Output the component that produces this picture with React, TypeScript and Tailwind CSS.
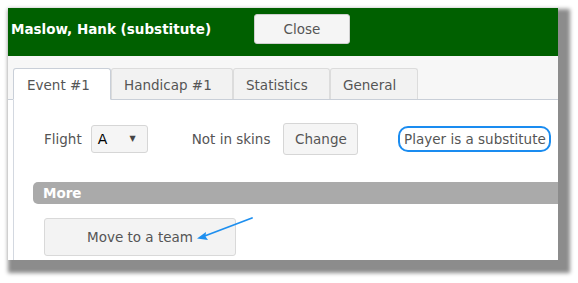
const font = { fontFamily: '"DejaVu Sans", Verdana, sans-serif' }

function Tab({ label, width, active }: { label: string; width: string; active?: boolean }) {
    return (
        <div
            className={
                active
                    ? `${width} h-[32px] -mb-px bg-white border border-[#c9cfd8] border-b-white rounded-t-[3px] flex items-center pl-[13px] pt-[2px] text-[13.5px] text-[#555]`
                    : `${width} h-[31px] bg-[#f2f2f2] border border-[#dcdcdc] border-b-0 rounded-t-[3px] flex items-center pl-[12px] pt-[2px] text-[13.5px] text-[#555]`
            }
        >
            {label}
        </div>
    )
}

function App() {
    return (
        <div className='w-[578px] h-[283px] bg-white pl-[8px] pt-[8px] overflow-hidden' style={font}>
            <div className='relative w-[550px] h-[252px] bg-white flex flex-col shadow-[6px_7px_4px_6px_#8c8c8c]'>
                {/* header */}
                <div className='h-[48px] bg-[#006000] flex items-start pt-[6px]'>
                    <div className='w-[246px] pl-[3px] leading-[30px] text-white font-bold text-[13.5px]'>
                        Maslow, Hank (substitute)
                    </div>
                    <button className='w-[96px] h-[30px] bg-[#f5f5f5] border border-[#cfcfcf] rounded-[3px] text-[13.5px] text-[#555]'>
                        Close
                    </button>
                </div>

                {/* tabs */}
                <div className='h-[44px] bg-[#f7f7f7] pt-[13px] pl-[5px] border-b border-[#c9cfd8] flex items-end'>
                    <Tab label='Event #1' width='w-[98px]' active />
                    <Tab label='Handicap #1' width='w-[122px]' />
                    <Tab label='Statistics' width='w-[97px]' />
                    <Tab label='General' width='w-[88px]' />
                </div>

                {/* body */}
                <div className='flex-1 ml-[5px] border-l border-[#d3d8e0] bg-white'>
                    <div className='flex items-center pt-[23px] pl-[30px] text-[13.5px] text-[#555]'>
                        <span>Flight</span>
                        <div className='ml-[9px] w-[57px] h-[28px] bg-[#f5f5f5] border border-[#d6d6d6] rounded-[3px] flex items-center justify-between px-[6px]'>
                            <span className='text-[14px] text-black'>A</span>
                            <span className='text-[8px] text-[#444] mr-[5px]'>▼</span>
                        </div>
                        <span className='ml-[44px]'>Not in skins</span>
                        <button className='ml-[13px] w-[75px] h-[32px] bg-[#f5f5f5] border border-[#d6d6d6] rounded-[3px] text-[13.5px] text-[#555]'>
                            Change
                        </button>
                        <div className='ml-[40px] w-[153px] h-[26px] border-2 border-[#1a8cf0] rounded-[10px] flex items-center justify-center text-[13.5px] text-[#555]'>
                            Player is a substitute
                        </div>
                    </div>

                    <div className='mt-[27px] ml-[19px] h-[22px] bg-[#aaaaaa] rounded-l-[5px] flex items-center pl-[10px] text-white font-bold text-[13.5px]'>
                        More
                    </div>

                    <button className='mt-[14px] ml-[30px] w-[192px] h-[38px] bg-[#f3f3f3] border border-[#d9d9d9] rounded-[3px] text-[13.5px] text-[#555]'>
                        Move to a team
                    </button>
                </div>

                {/* annotation arrow */}
                <svg className='absolute left-[178px] top-[205px]' width='72' height='40' viewBox='0 0 72 40'>
                    <line x1='66' y1='5' x2='16' y2='24' stroke='#1e8fef' strokeWidth='1.8' strokeLinecap='round' />
                    <path d='M11 25.5 L20 19 L19.5 23.5 L22 27 Z' fill='#1e8fef' />
                </svg>
            </div>
        </div>
    )
}

export default App;
